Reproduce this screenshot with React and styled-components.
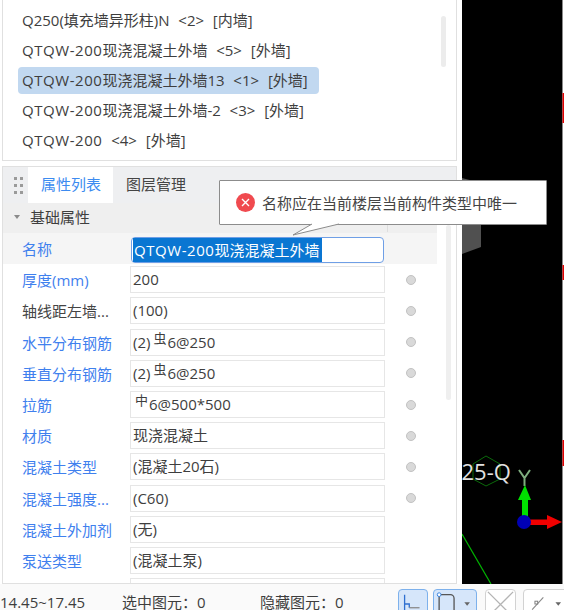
import React from "react";
import styled, { createGlobalStyle } from "styled-components";

const Global = createGlobalStyle`
  html, body { margin: 0; padding: 0; width: 564px; height: 610px; overflow: hidden; background: #fff; }
  body { font-family: "Open Sans", "Noto Sans CJK SC", sans-serif; font-size: 15px; color: #3e3e3e; }
  * { box-sizing: border-box; }
`;

const Page = styled.div`
  position: relative;
  width: 564px;
  height: 610px;
  display: flex;
  flex-direction: column;
  overflow: hidden;
`;
const Main = styled.div`
  display: flex;
  height: 584px;
`;
const LeftPane = styled.div`
  width: 462px;
  padding-left: 2px;
  display: flex;
  flex-direction: column;
  gap: 5px;
  background: #fff;
`;
const ListPanel = styled.div`
  position: relative;
  width: 455px;
  height: 161px;
  padding: 7px 0 0 15px;
  border: 1px solid #e0e0e0;
  border-top: 0;
  display: flex;
  flex-direction: column;
  align-items: flex-start;
  gap: 3px;
`;
const ListItem = styled.div`
  height: 27px;
  line-height: 27px;
  padding: 0 11px 0 4px;
  border-radius: 4px;
  white-space: pre;
  word-spacing: 0.5px;
  background: ${(p) => (p.$selected ? "#c1d8f0" : "transparent")};
`;
const Code = styled.span`
  letter-spacing: 0.55px;
`;
const ListScroll = styled.div`
  position: absolute;
  left: 438px;
  top: 16px;
  width: 5px;
  height: 51px;
  border-radius: 3px;
  background: #ececec;
`;
const PropPanel = styled.div`
  position: relative;
  width: 455px;
  height: 418px;
  border: 1px solid #e0e0e0;
  overflow: hidden;
`;
const TabBar = styled.div`
  height: 36px;
  display: flex;
  background: #eeeff1;
`;
const Grip = styled.div`
  width: 25px;
  padding: 10px 0 0 11px;
  display: grid;
  grid-template-columns: 3px 3px;
  grid-auto-rows: 3px;
  column-gap: 3px;
  row-gap: 4px;
  span { background: #9a9a9a; }
`;
const Tab = styled.div`
  width: ${(p) => (p.$active ? "85px" : "auto")};
  padding-left: 13px;
  line-height: 34px;
  color: ${(p) => (p.$active ? "#3c8bf0" : "#444")};
  background: ${(p) => (p.$active ? "#fff" : "transparent")};
`;
const Section = styled.div`
  width: 434px;
  height: 30px;
  padding-bottom: 3px;
  display: flex;
  align-items: center;
  background: #efefef;
`;
const Caret = styled.i`
  width: 0;
  height: 0;
  margin: 0 10px 0 11px;
  border-left: 3px solid transparent;
  border-right: 3px solid transparent;
  border-top: 4px solid #8a8a8a;
`;
const HeadCell = styled.div`
  margin-left: auto;
  width: 50px;
  height: 30px;
  border-left: 1px solid #dedede;
`;
const Row = styled.div`
  width: 434px;
  height: 31.2px;
  display: grid;
  grid-template-columns: 127px 255px 52px;
  align-items: center;
  background: ${(p) => (p.$active ? "#f5f5f5" : "transparent")};
`;
const Label = styled.div`
  padding-left: 19px;
  white-space: pre;
  color: ${(p) => (p.$plain ? "#444" : "#3f80ee")};
`;
const Field = styled.div`
  height: 27px;
  line-height: 25px;
  padding-left: ${(p) => (p.$inset ? "4px" : "2px")};
  border: 1px solid #e6e6e6;
  white-space: pre;
  background: #fff;
`;
const ActiveField = styled.div`
  height: 26px;
  width: 253px;
  margin: 3px 0 0 1px;
  padding: 0 0 0 1px;
  border: 1px solid #6f9fe6;
  border-radius: 4px;
  background: #fff;
  white-space: pre;
  line-height: 24px;
`;
const Selected = styled.span`
  display: inline-block;
  padding: 0 3px 0 1px;
  background: #0a76d2;
  color: #fff;
`;
const Rebar = styled.span`
  font-size: 13px;
  line-height: 1;
  vertical-align: 5px;
  margin: 0 1px 0 ${(p) => (p.$tight ? "0" : "3px")};
`;
const Dot = styled.i`
  justify-self: center;
  width: 10px;
  height: 10px;
  border-radius: 50%;
  background: #d9d9d9;
  border: 1px solid #c2c2c2;
`;
const PropScroll = styled.div`
  position: absolute;
  left: 443px;
  top: 58px;
  width: 5px;
  height: 175px;
  border-radius: 3px;
  background: #efefef;
`;
const Canvas = styled.svg`
  display: block;
  flex: none;
  width: 102px;
  height: 584px;
`;
const StatusBar = styled.div`
  height: 26px;
  display: flex;
  background: #fafafa;
  overflow: hidden;
`;
const StatusText = styled.div`
  flex: none;
  width: ${(p) => p.$w}px;
  padding-top: 10px;
  line-height: 16px;
  white-space: pre;
`;
const Tools = styled.div`
  display: flex;
  padding-top: 5px;
  gap: 5px;
`;
const ToolButton = styled.div`
  flex: none;
  position: relative;
  width: ${(p) => p.$w}px;
  height: 30px;
  margin-right: ${(p) => p.$mr || 0}px;
  border: 1px solid ${(p) => (p.$on ? "#7db1ec" : "#d2d2d2")};
  border-radius: 4px;
  background: ${(p) => (p.$on ? "#d6e6fa" : "#fff")};
`;
const ToolIcon = styled.svg`
  display: block;
  width: 100%;
  height: 100%;
`;
const Tooltip = styled.div`
  position: absolute;
  left: 219px;
  top: 180px;
  width: 328px;
  height: 45px;
  display: flex;
  align-items: center;
  gap: 7px;
  padding-left: 16px;
  background: #fff;
  border: 1px solid #8c8c8c;
  border-radius: 1px;
  font-size: 15px;
  color: #444;
`;
const Pointer = styled.svg`
  position: absolute;
  left: 70px;
  top: 42px;
  width: 60px;
  height: 16px;
`;

const Q = <Code>QTQW-200</Code>;
const items = [
  [<>Q250(填充墙异形柱)N  {"<2>"}  [内墙]</>],
  [<>{Q}现浇混凝土外墙  {"<5>"}  [外墙]</>],
  [<>{Q}现浇混凝土外墙13  {"<1>"}  [外墙]</>, true],
  [<>{Q}现浇混凝土外墙-2  {"<3>"}  [外墙]</>],
  [<>{Q}  {"<4>"}  [外墙]</>],
];

const rows = [
  { label: "厚度(mm)", value: "200", dot: true },
  { label: "轴线距左墙...", value: "(100)", dot: true, plain: true },
  { label: "水平分布钢筋", value: <>(2)<Rebar>虫</Rebar>6@250</>, dot: true },
  { label: "垂直分布钢筋", value: <>(2)<Rebar>虫</Rebar>6@250</>, dot: true },
  { label: "拉筋", value: <><Rebar $tight>中</Rebar>6@500*500</>, dot: true, inset: true },
  { label: "材质", value: "现浇混凝土", dot: true },
  { label: "混凝土类型", value: "(混凝土20石)", dot: true },
  { label: "混凝土强度...", value: "(C60)", dot: true },
  { label: "混凝土外加剂", value: "(无)" },
  { label: "泵送类型", value: "(混凝土泵)" },
  { label: "", value: "" },
];

export default function App() {
  return (
    <Page>
      <Global />
      <Main>
        <LeftPane>
          <ListPanel>
            {items.map(([t, s], i) => (
              <ListItem key={i} $selected={s}>{t}</ListItem>
            ))}
            <ListScroll />
          </ListPanel>
          <PropPanel>
            <TabBar>
              <Grip>{[0, 1, 2, 3, 4, 5].map((i) => <span key={i} />)}</Grip>
              <Tab $active>属性列表</Tab>
              <Tab>图层管理</Tab>
            </TabBar>
            <Section>
              <Caret />
              基础属性
              <HeadCell />
            </Section>
            <Row $active>
              <Label>名称</Label>
              <ActiveField><Selected>{Q}现浇混凝土外墙</Selected></ActiveField>
            </Row>
            {rows.map((r, i) => (
              <Row key={i}>
                <Label $plain={r.plain}>{r.label}</Label>
                <Field $inset={r.inset}>{r.value}</Field>
                {r.dot && <Dot />}
              </Row>
            ))}
            <PropScroll />
          </PropPanel>
        </LeftPane>
        <Canvas viewBox="462 0 102 584">
          <rect x="462" y="0" width="102" height="584" fill="#000" />
          <polygon points="462,178 481,183 481,247 462,254" fill="#505050" />
          <rect x="562" y="0" width="1" height="584" fill="#8a8a8a" />
          <rect x="563" y="0" width="1" height="584" fill="#fff" />
          <rect x="562.5" y="93" width="1.5" height="30" fill="#e00000" />
          <rect x="562.5" y="265" width="1.5" height="15" fill="#e00000" />
          <rect x="562.5" y="440" width="1.5" height="26" fill="#e00000" />
          <polygon points="486,456 500,464 500,479 486,486 473,479 473,464" fill="none" stroke="#0b6b0b" strokeWidth="1" />
          <text x="461.5" y="480" fontFamily="'Open Sans', sans-serif" fontSize="22" fill="#e2e2e2">25-Q</text>
          <line x1="462" y1="534" x2="491" y2="584" stroke="#00b400" strokeWidth="1.2" />
          <path d="M519 470l5.5 8 5.5-8M524.5 478v8" fill="none" stroke="#7fae7f" strokeWidth="2" />
          <rect x="522" y="498" width="6" height="20" fill="#00e000" />
          <polygon points="525,485 531,500 518,500" fill="#00e000" />
          <rect x="530" y="519.5" width="18" height="5.5" fill="#f00000" />
          <polygon points="547,515 562,522 547,529" fill="#f00000" />
          <circle cx="524" cy="522" r="7" fill="#0000b4" />
        </Canvas>
      </Main>
      <StatusBar>
        <StatusText $w={122}>14.45~17.45</StatusText>
        <StatusText $w={138}>选中图元：0</StatusText>
        <StatusText $w={138}>隐藏图元：0</StatusText>
        <Tools>
          <ToolButton $on $w={30}>
            <ToolIcon viewBox="0 0 30 30">
              <path d="M6 5v20M6 15h5v4" fill="none" stroke="#2f6fd0" strokeWidth="1.4" />
              <path d="M11 19h11" fill="none" stroke="#8a8a8a" strokeWidth="1.4" />
            </ToolIcon>
          </ToolButton>
          <ToolButton $on $w={44} $mr={3}>
            <ToolIcon viewBox="0 0 44 30">
              <path d="M5 5h12a4 4 0 0 1 4 4v21M5 5v25" fill="none" stroke="#555" strokeWidth="1.4" />
              <circle cx="5" cy="5" r="2" fill="#fff" stroke="#2f7fe0" />
              <polygon points="32,13 38,13 35,17" fill="#666" />
            </ToolIcon>
          </ToolButton>
          <ToolButton $w={31} $mr={2}>
            <ToolIcon viewBox="0 0 31 30">
              <path d="M2 2l27 27M29 2L2 29" fill="none" stroke="#b4b4b4" strokeWidth="1.4" />
            </ToolIcon>
          </ToolButton>
          <ToolButton $w={50}>
            <ToolIcon viewBox="0 0 50 30">
              <path d="M8 21l12-13" fill="none" stroke="#8a8a8a" strokeWidth="1.2" />
              <rect x="11" y="12" width="3" height="3" fill="#fff" stroke="#777" />
              <polygon points="33,13 39,13 36,17" fill="#666" />
            </ToolIcon>
          </ToolButton>
        </Tools>
      </StatusBar>
      <Tooltip>
        <svg width="19" height="19" viewBox="0 0 19 19">
          <circle cx="9.5" cy="9.5" r="9.5" fill="#f04a4f" />
          <path d="M6 6l7 7M13 6l-7 7" stroke="#fff" strokeWidth="1.4" />
        </svg>
        名称应在当前楼层当前构件类型中唯一
        <Pointer viewBox="0 0 60 16">
          <polygon points="22,1 3,12 49,1" fill="#fff" />
          <path d="M22 1L3 12L49 1" fill="none" stroke="#8c8c8c" />
        </Pointer>
      </Tooltip>
    </Page>
  );
}
